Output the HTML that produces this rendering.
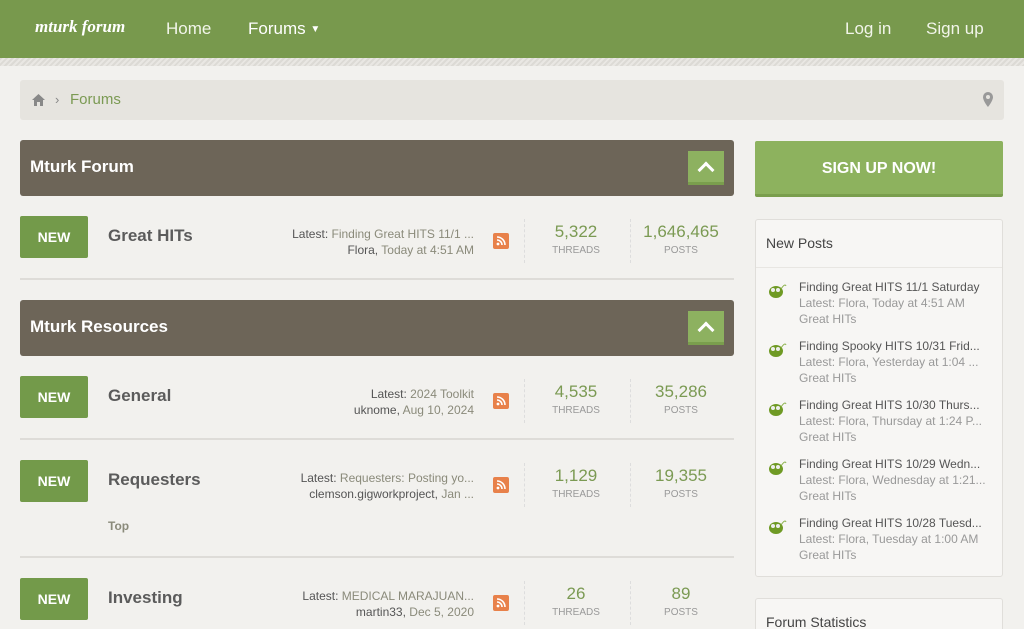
<!DOCTYPE html>
<html><head><meta charset="utf-8"><style>
*{box-sizing:border-box;margin:0;padding:0}
html,body{width:1024px;height:629px;overflow:hidden}
body{background:#f2f1ee;font-family:"Liberation Sans",sans-serif;position:relative;color:#555}
.hdr{position:absolute;left:0;top:0;width:1024px;height:58px;background:#78994d}
.stripe{position:absolute;left:0;top:58px;width:1024px;height:8px;background:repeating-linear-gradient(135deg,#dcdad5 0 2px,#e9e7e3 2px 4px)}
.a{position:absolute;white-space:nowrap}
.nav{color:#f2f5ea;font-size:17px;top:19px}
.bc{position:absolute;left:20px;top:80px;width:984px;height:40px;background:#e6e4df;border-radius:3px}
.cat{position:absolute;left:20px;width:714px;height:56px;background:#6d6558;border-radius:3px}
.cat span{position:absolute;left:10px;top:17px;color:#fff;font-weight:bold;font-size:17px}
.col{position:absolute;left:668px;top:11px;width:36px;height:34px;background:#8db160;border-bottom:3px solid #7a9e4d}
.col:after{content:"";position:absolute;left:12px;top:13px;width:9px;height:9px;border-left:3px solid #fff;border-top:3px solid #fff;transform:rotate(45deg)}
.new{position:absolute;left:20px;width:68px;height:42px;background:#739a4a;color:#fff;font-weight:bold;font-size:14px;text-align:center;line-height:42px;border-radius:2px}
.ttl{position:absolute;left:108px;font-size:17px;font-weight:bold;color:#5b5b5b}
.lt{position:absolute;right:550px;text-align:right;font-size:12px;line-height:16px;color:#555}
.lt i{font-style:normal;color:#8a8a7a}
.rss{position:absolute;left:493px;width:16px;height:16px;background:#e8814a;border-radius:2px}
.st{position:absolute;width:100px;text-align:center}
.st b{display:block;font-weight:normal;font-size:17px;color:#7b9a53}
.st small{display:block;font-size:10px;color:#999;margin-top:3px}
.vl{position:absolute;width:0;height:44px;border-left:1px dashed #ddd}
.hl{position:absolute;left:20px;width:714px;height:2px;background:#dedcd8}
.box{position:absolute;left:755px;width:248px;background:#f7f6f4;border:1px solid #e0deda;border-radius:3px}
.np{position:absolute;left:799px;font-size:12px;line-height:16px}
.np div:first-child{color:#555}
.np div{color:#999}
.av{position:absolute;left:767px;width:20px;height:20px}
</style></head><body>
<div class="hdr"></div><div class="stripe"></div>
<div class="a" style="left:35px;top:17px;color:#fff;font:italic bold 17px 'Liberation Serif',serif">mturk forum</div>
<div class="a nav" style="left:166px">Home</div>
<div class="a nav" style="left:248px;color:#fff">Forums <span style="font-size:10px;vertical-align:2px">▼</span></div>
<div class="a nav" style="left:845px">Log in</div>
<div class="a nav" style="left:926px">Sign up</div>
<div class="bc"><svg class="a" style="left:11px;top:13px" width="15" height="14" viewBox="0 0 15 14"><path d="M7.5 1 L1 7 H3 V13 H6 V9 H9 V13 H12 V7 H14 Z" fill="#888"/></svg><span class="a" style="left:35px;top:12px;color:#888;font-size:13px">›</span><span class="a" style="left:50px;top:11px;color:#7b9a53;font-size:15px">Forums</span><svg class="a" style="right:11px;top:12px" width="10" height="15" viewBox="0 0 10 15"><path d="M5 0 A5 5 0 0 1 10 5 C10 9 5 15 5 15 C5 15 0 9 0 5 A5 5 0 0 1 5 0 Z M5 3 A2 2 0 1 0 5 7 A2 2 0 1 0 5 3Z" fill="#999" fill-rule="evenodd"/></svg></div>

<div class="cat" style="top:140px"><span>Mturk Forum</span><div class="col"></div></div>
<div class="new" style="top:216px">NEW</div><div class="ttl" style="top:226px">Great HITs</div>
<div class="lt" style="top:226px">Latest: <i>Finding Great HITS 11/1 ...</i><br>Flora, <i>Today at 4:51 AM</i></div>
<svg class="rss" style="top:233px" viewBox="0 0 16 16"><circle cx="5" cy="11" r="1.4" fill="#fff"/><path d="M4 7 A5 5 0 0 1 9 12 M4 4 A8 8 0 0 1 12 12" stroke="#fff" stroke-width="1.6" fill="none"/></svg>
<div class="vl" style="left:524px;top:219px"></div><div class="st" style="left:526px;top:222px"><b>5,322</b><small>THREADS</small></div>
<div class="vl" style="left:630px;top:219px"></div><div class="st" style="left:631px;top:222px"><b>1,646,465</b><small>POSTS</small></div>
<div class="hl" style="top:278px"></div>

<div class="cat" style="top:300px"><span>Mturk Resources</span><div class="col"></div></div>
<div class="new" style="top:376px">NEW</div><div class="ttl" style="top:386px">General</div>
<div class="lt" style="top:386px">Latest: <i>2024 Toolkit</i><br>uknome, <i>Aug 10, 2024</i></div>
<svg class="rss" style="top:393px" viewBox="0 0 16 16"><circle cx="5" cy="11" r="1.4" fill="#fff"/><path d="M4 7 A5 5 0 0 1 9 12 M4 4 A8 8 0 0 1 12 12" stroke="#fff" stroke-width="1.6" fill="none"/></svg>
<div class="vl" style="left:524px;top:379px"></div><div class="st" style="left:526px;top:382px"><b>4,535</b><small>THREADS</small></div>
<div class="vl" style="left:630px;top:379px"></div><div class="st" style="left:631px;top:382px"><b>35,286</b><small>POSTS</small></div>
<div class="hl" style="top:438px"></div>

<div class="new" style="top:460px">NEW</div><div class="ttl" style="top:470px">Requesters</div>
<div class="a" style="left:108px;top:519px;font-size:12px;font-weight:bold;color:#8a8a7a">Top</div>
<div class="lt" style="top:470px">Latest: <i>Requesters: Posting yo...</i><br>clemson.gigworkproject, <i>Jan ...</i></div>
<svg class="rss" style="top:477px" viewBox="0 0 16 16"><circle cx="5" cy="11" r="1.4" fill="#fff"/><path d="M4 7 A5 5 0 0 1 9 12 M4 4 A8 8 0 0 1 12 12" stroke="#fff" stroke-width="1.6" fill="none"/></svg>
<div class="vl" style="left:524px;top:463px"></div><div class="st" style="left:526px;top:466px"><b>1,129</b><small>THREADS</small></div>
<div class="vl" style="left:630px;top:463px"></div><div class="st" style="left:631px;top:466px"><b>19,355</b><small>POSTS</small></div>
<div class="hl" style="top:556px"></div>

<div class="new" style="top:578px">NEW</div><div class="ttl" style="top:588px">Investing</div>
<div class="lt" style="top:588px">Latest: <i>MEDICAL MARAJUAN...</i><br>martin33, <i>Dec 5, 2020</i></div>
<svg class="rss" style="top:595px" viewBox="0 0 16 16"><circle cx="5" cy="11" r="1.4" fill="#fff"/><path d="M4 7 A5 5 0 0 1 9 12 M4 4 A8 8 0 0 1 12 12" stroke="#fff" stroke-width="1.6" fill="none"/></svg>
<div class="vl" style="left:524px;top:581px"></div><div class="st" style="left:526px;top:584px"><b>26</b><small>THREADS</small></div>
<div class="vl" style="left:630px;top:581px"></div><div class="st" style="left:631px;top:584px"><b>89</b><small>POSTS</small></div>

<div class="a" style="left:755px;top:141px;width:248px;height:56px;background:#8db25e;border-bottom:3px solid #7a9e4d;border-radius:2px;color:#fff;font-weight:bold;font-size:16px;text-align:center;line-height:56px">SIGN UP NOW!</div>
<div class="box" style="top:219px;height:358px"><div class="a" style="left:10px;top:15px;font-size:14px;color:#444">New Posts</div><div style="position:absolute;left:0;top:47px;width:100%;border-top:1px solid #e8e6e2"></div></div>
<svg class="av" style="top:281px" viewBox="0 0 20 20"><ellipse cx="9" cy="11" rx="7" ry="6" fill="#6f9a24"/><circle cx="6" cy="9" r="2" fill="#eee"/><circle cx="11" cy="9" r="2" fill="#eee"/><path d="M14 8 Q18 2 19 5" stroke="#8ab04a" fill="none"/></svg><div class="np" style="top:279px"><div>Finding Great HITS 11/1 Saturday</div><div>Latest: Flora, Today at 4:51 AM</div><div>Great HITs</div></div>
<svg class="av" style="top:340px" viewBox="0 0 20 20"><ellipse cx="9" cy="11" rx="7" ry="6" fill="#6f9a24"/><circle cx="6" cy="9" r="2" fill="#eee"/><circle cx="11" cy="9" r="2" fill="#eee"/><path d="M14 8 Q18 2 19 5" stroke="#8ab04a" fill="none"/></svg><div class="np" style="top:338px"><div>Finding Spooky HITS 10/31 Frid...</div><div>Latest: Flora, Yesterday at 1:04 ...</div><div>Great HITs</div></div>
<svg class="av" style="top:399px" viewBox="0 0 20 20"><ellipse cx="9" cy="11" rx="7" ry="6" fill="#6f9a24"/><circle cx="6" cy="9" r="2" fill="#eee"/><circle cx="11" cy="9" r="2" fill="#eee"/><path d="M14 8 Q18 2 19 5" stroke="#8ab04a" fill="none"/></svg><div class="np" style="top:397px"><div>Finding Great HITS 10/30 Thurs...</div><div>Latest: Flora, Thursday at 1:24 P...</div><div>Great HITs</div></div>
<svg class="av" style="top:458px" viewBox="0 0 20 20"><ellipse cx="9" cy="11" rx="7" ry="6" fill="#6f9a24"/><circle cx="6" cy="9" r="2" fill="#eee"/><circle cx="11" cy="9" r="2" fill="#eee"/><path d="M14 8 Q18 2 19 5" stroke="#8ab04a" fill="none"/></svg><div class="np" style="top:456px"><div>Finding Great HITS 10/29 Wedn...</div><div>Latest: Flora, Wednesday at 1:21...</div><div>Great HITs</div></div>
<svg class="av" style="top:517px" viewBox="0 0 20 20"><ellipse cx="9" cy="11" rx="7" ry="6" fill="#6f9a24"/><circle cx="6" cy="9" r="2" fill="#eee"/><circle cx="11" cy="9" r="2" fill="#eee"/><path d="M14 8 Q18 2 19 5" stroke="#8ab04a" fill="none"/></svg><div class="np" style="top:515px"><div>Finding Great HITS 10/28 Tuesd...</div><div>Latest: Flora, Tuesday at 1:00 AM</div><div>Great HITs</div></div>
<div class="box" style="top:598px;height:60px"><div class="a" style="left:10px;top:15px;font-size:14px;color:#444">Forum Statistics</div></div>
</body></html>
